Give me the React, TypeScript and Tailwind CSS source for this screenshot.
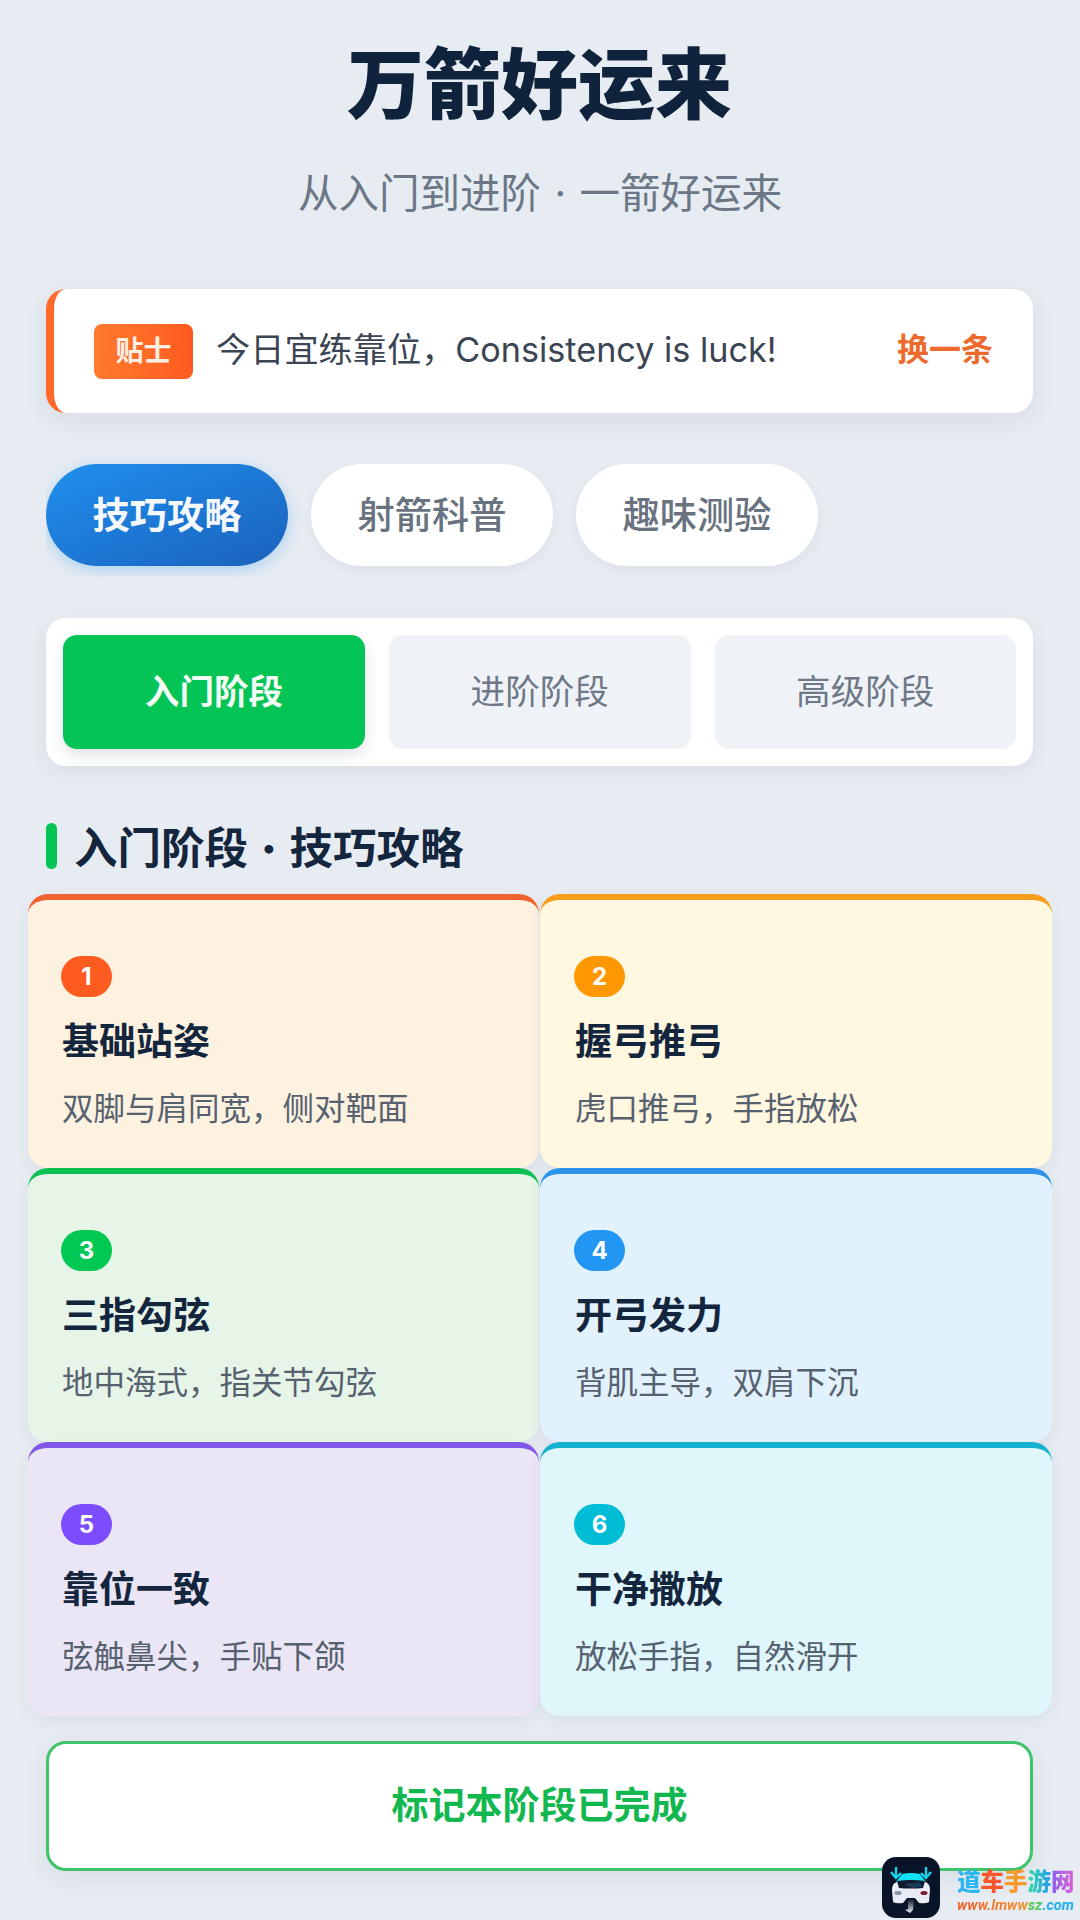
import React from "react";

const cards = [
  { n: "1", t: "基础站姿", d: "双脚与肩同宽，侧对靶面", card: "bg-[#fdf2e0] border-t-[#f0622d]", badge: "bg-[#ff5a1f]" },
  { n: "2", t: "握弓推弓", d: "虎口推弓，手指放松", card: "bg-[#fff7e0] border-t-[#f59e1b]", badge: "bg-[#ff9800]" },
  { n: "3", t: "三指勾弦", d: "地中海式，指关节勾弦", card: "bg-[#e7f4e8] border-t-[#0cc152]", badge: "bg-[#00c853]" },
  { n: "4", t: "开弓发力", d: "背肌主导，双肩下沉", card: "bg-[#e2f2fd] border-t-[#2b93ea]", badge: "bg-[#2196f3]" },
  { n: "5", t: "靠位一致", d: "弦触鼻尖，手贴下颌", card: "bg-[#ebe6f5] border-t-[#8057e6]", badge: "bg-[#7c4dff]" },
  { n: "6", t: "干净撒放", d: "放松手指，自然滑开", card: "bg-[#dff6fa] border-t-[#13b1cf]", badge: "bg-[#00bcd4]" },
];

const font = "font-['Inter','Noto_Sans_CJK_SC',sans-serif]";

function Logo() {
  return (
    <svg viewBox="0 0 58 61" className="h-[61px] w-[58px]">
      <defs>
        <linearGradient id="stem" x1="0" y1="0" x2="0" y2="1">
          <stop offset="0" stopColor="#0a1428" />
          <stop offset="1" stopColor="#e8ecf5" />
        </linearGradient>
      </defs>
      <rect x="0" y="0" width="58" height="61" rx="14" fill="#0a1428" />
      <path d="M14 10 L14 20 M9 15 L14 21 L19 16" fill="none" stroke="#16d4ea" strokeWidth="2.4" />
      <path d="M44 10 L44 20 M39 16 L44 21 L49 15" fill="none" stroke="#16d4ea" strokeWidth="2.4" />
      <path d="M14 25 L20 17 Q29 15 38 17 L44 25 Z" fill="#12e0f5" />
      <path d="M10 33 Q10 26 15 25 L43 25 Q48 26 48 33 L47 45 Q44 47 37 46 L33 41 L25 41 L21 46 Q14 47 11 45 Z" fill="#e9ecf4" />
      <path d="M15 24 Q29 22 43 24 L41 31 Q29 32 17 31 Z" fill="#101a30" />
      <path d="M22 27 L38 25 L40 30 L30 31 Z" fill="#1a3a5c" />
      <ellipse cx="16" cy="36" rx="3.6" ry="2" fill="#8a93a5" />
      <ellipse cx="42" cy="36" rx="3.6" ry="2" fill="#7a2030" />
      <path d="M26 42 L32 42 L31 53 L28 56 L23 53 L26 52 Z" fill="url(#stem)" />
    </svg>
  );
}

export default function App() {
  return (
    <div className={`relative h-[1920px] w-[1080px] overflow-hidden bg-[#e7ecf2] pl-[46px] pr-[47px] ${font}`}>
      <h1 className="mt-[35px] text-center text-[77px] font-black leading-[100px] text-[#10233c]">万箭好运来</h1>
      <p className="mt-[29px] pl-[1px] text-center text-[40.5px] leading-[60px] text-[#6b7786]">
        从入门到进阶<span className="mx-[2px]"> · </span>一箭好运来
      </p>

      <div className="mt-[65px] flex h-[124px] items-center rounded-[20px] border-l-[8px] border-l-[#ff6a2b] bg-white pl-[40px] pr-[40px] shadow-[0_8px_24px_rgba(30,50,80,0.08)]">
        <span className="flex h-[55px] w-[99px] items-center justify-center rounded-[8px] bg-gradient-to-r from-[#ff7a2e] to-[#ff5a1f] text-[28px] font-bold text-[#fdf0e6]">贴士</span>
        <span className="ml-[23px] mb-[3px] flex-1 text-[34.2px] text-[#3a4453]">今日宜练靠位，Consistency is luck!</span>
        <span className="mb-[2px] text-[32px] font-bold text-[#ee6a2c]">换一条</span>
      </div>

      <div className="mt-[40px] flex gap-[23px] overflow-x-hidden pb-[11px] pt-[11px]">
        <div className="flex h-[102px] w-[242px] items-center justify-center rounded-[51px] bg-gradient-to-br from-[#2090ee] to-[#1a62bd] pt-[2px] text-[37.2px] font-bold text-[#f4f8fd] shadow-[0_4px_16px_rgba(33,150,243,0.3)]">技巧攻略</div>
        <div className="flex h-[102px] w-[242px] items-center justify-center rounded-[51px] bg-white pt-[2px] text-[37.2px] font-medium text-[#69737f] shadow-[0_4px_12px_rgba(30,50,80,0.06)]">射箭科普</div>
        <div className="flex h-[102px] w-[242px] items-center justify-center rounded-[51px] bg-white pt-[2px] text-[37.2px] font-medium text-[#69737f] shadow-[0_4px_12px_rgba(30,50,80,0.06)]">趣味测验</div>
      </div>

      <div className="mt-[41px] flex h-[148px] items-center gap-[24px] rounded-[20px] bg-white px-[17px] shadow-[0_6px_20px_rgba(30,50,80,0.07)]">
        <div className="flex h-[114px] w-[302px] items-center justify-center rounded-[14px] bg-[#04c455] text-[34.6px] font-bold text-[#f3fdf6] shadow-[0_6px_14px_rgba(30,50,80,0.14)]">入门阶段</div>
        <div className="flex h-[114px] flex-1 items-center justify-center rounded-[14px] bg-[#eff3f8] text-[34.6px] text-[#6e7886]">进阶阶段</div>
        <div className="flex h-[114px] flex-1 items-center justify-center rounded-[14px] bg-[#eff3f8] text-[34.6px] text-[#6e7886]">高级阶段</div>
      </div>

      <div className="mt-[57px] flex h-[46px] items-center">
        <span className="h-[46px] w-[11px] rounded-full bg-[#04c455]" />
        <h2 className="ml-[17px] mt-[3px] text-[43.5px] font-bold leading-[46px] text-[#14263d]">
          入门阶段<span className="mx-[4px] font-black"> · </span>技巧攻略
        </h2>
      </div>

      <div className="ml-[-18px] mr-[-19px] mt-[25px] grid grid-cols-[511px_512px] gap-x-[1px]">
        {cards.map((c) => (
          <div key={c.n} className={`h-[274px] rounded-[20px] border-t-[6px] pl-[33px] pt-[56px] shadow-[0_6px_16px_rgba(30,50,80,0.06)] even:pl-[34px] ${c.card}`}>
            <div className={`flex h-[41px] w-[51px] items-center justify-center rounded-full text-[24px] font-bold text-white ${c.badge}`}>{c.n}</div>
            <div className="ml-[1px] mt-[20px] text-[37px] font-bold leading-[50px] text-[#14263d]">{c.t}</div>
            <div className="ml-[1px] mt-[20px] text-[31.5px] leading-[44px] text-[#566170]">{c.d}</div>
          </div>
        ))}
      </div>

      <div className="mt-[25px] flex h-[130px] items-center justify-center rounded-[20px] border-[3px] border-[#3fc46a] bg-white text-[37px] font-bold text-[#12b84f] shadow-[0_8px_24px_rgba(30,50,80,0.07)]">标记本阶段已完成</div>

      <div className="absolute left-[882px] top-[1857px] flex">
        <Logo />
        <div className="ml-[17px] flex flex-col">
          <span className="mt-[10px] text-[23.5px] font-black leading-[30px]">
            <span className="text-[#2cb6f2]">道</span>
            <span className="text-[#f4572c]">车</span>
            <span className="text-[#f79a2a]">手</span>
            <span className="bg-gradient-to-r from-[#3ad8a0] to-[#2b9cf0] bg-clip-text text-transparent">游</span>
            <span className="bg-gradient-to-r from-[#8a5cf2] to-[#e060d0] bg-clip-text text-transparent">网</span>
          </span>
          <span className="font-['Roboto'] text-[14.5px] font-bold italic leading-[18px]">
            <span className="bg-gradient-to-r from-[#ee5a2c] to-[#f0942a] bg-clip-text text-transparent">www.lmww</span>
            <span className="text-[#55c860]">sz</span>
            <span className="text-[#22b0ee]">.com</span>
          </span>
        </div>
      </div>
    </div>
  );
}
